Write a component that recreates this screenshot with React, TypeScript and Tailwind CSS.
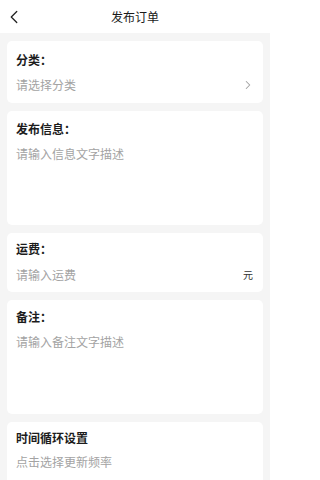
import { ChevronLeft, ChevronRight } from "lucide-react"

const font = { fontFamily: '"Noto Sans CJK SC", "Noto Sans", sans-serif' }

function Label({ children }: { children: React.ReactNode }) {
  return <div className="text-[12px] leading-[14px] font-bold text-[#1c1c1c]">{children}</div>
}

function Hint({ children }: { children: React.ReactNode }) {
  return <div className="text-[12px] leading-[16px] text-[#a3a3a3]">{children}</div>
}

export default function App() {
  return (
    <div className="w-[270px] h-[480px] overflow-hidden bg-[#f5f5f5]" style={font}>
      {/* Header */}
      <header className="relative h-[33px] bg-white flex items-center justify-center">
        <ChevronLeft className="absolute left-[3px] top-[6px] w-[22px] h-[22px] text-[#222]" strokeWidth={1.4} />
        <h1 className="text-[12px] leading-[16px] text-[#1a1a1a]">发布订单</h1>
      </header>

      <main className="px-[7px] pt-[8px] flex flex-col gap-[8px]">
        {/* Category */}
        <section className="bg-white rounded-[5px] pl-[9px] pr-[8px] pt-[12px] pb-[10px]">
          <Label>分类：</Label>
          <div className="mt-[10px] flex items-center justify-between">
            <Hint>请选择分类</Hint>
            <ChevronRight className="w-[14px] h-[14px] text-[#a0a0a0]" strokeWidth={1.8} />
          </div>
        </section>

        {/* Description */}
        <section className="bg-white rounded-[5px] h-[114px] pl-[9px] pr-[10px] pt-[11px]">
          <Label>发布信息：</Label>
          <div className="mt-[10px]">
            <Hint>请输入信息文字描述</Hint>
          </div>
        </section>

        {/* Freight */}
        <section className="bg-white rounded-[5px] pl-[9px] pr-[10px] pt-[9px] pb-[9px]">
          <Label>运费：</Label>
          <div className="mt-[11px] flex items-center justify-between">
            <Hint>请输入运费</Hint>
            <span className="text-[10px] leading-[16px] text-[#333]">元</span>
          </div>
        </section>

        {/* Remarks */}
        <section className="bg-white rounded-[5px] h-[114px] pl-[9px] pr-[10px] pt-[10px]">
          <Label>备注：</Label>
          <div className="mt-[10px]">
            <Hint>请输入备注文字描述</Hint>
          </div>
        </section>

        {/* Repeat */}
        <section className="bg-white rounded-[5px] h-[80px] pl-[9px] pr-[10px] pt-[9px]">
          <Label>时间循环设置</Label>
          <div className="mt-[9px]">
            <Hint>点击选择更新频率</Hint>
          </div>
        </section>
      </main>
    </div>
  )
}
